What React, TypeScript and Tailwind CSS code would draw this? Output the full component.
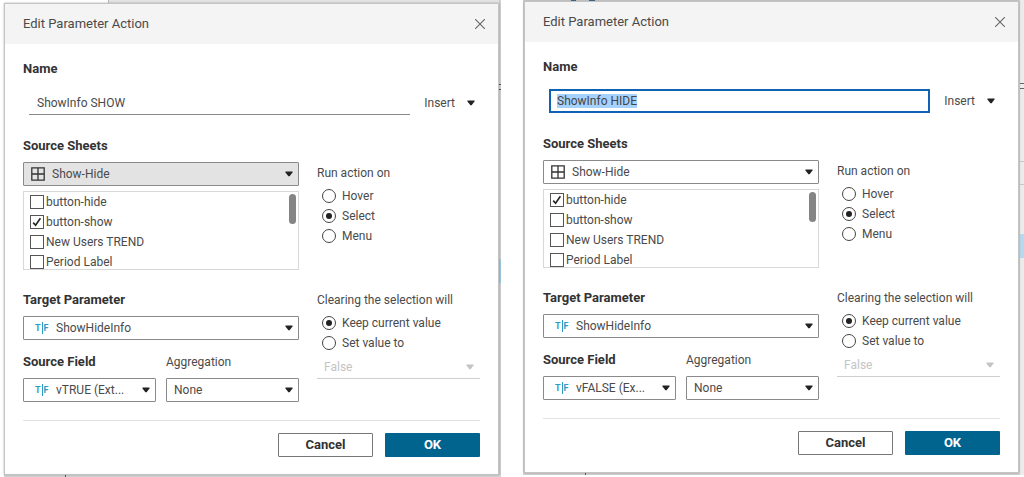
import { useEffect, useId, useRef, useState } from "react";
import type { ReactNode } from "react";

interface ActionConfig {
	name: string;
	nameSelected: boolean;
	sheetMenuActive: boolean;
	checkedSheet: string;
	sourceField: string;
}

const SHEETS = ["button-hide", "button-show", "New Users TREND", "Period Label"];

const ACTIONS: ActionConfig[] = [
	{
		name: "ShowInfo SHOW",
		nameSelected: false,
		sheetMenuActive: true,
		checkedSheet: "button-show",
		sourceField: "vTRUE (Ext...",
	},
	{
		name: "ShowInfo HIDE",
		nameSelected: true,
		sheetMenuActive: false,
		checkedSheet: "button-hide",
		sourceField: "vFALSE (Ex...",
	},
];

function Caret({ className = "" }: { className?: string }) {
	return (
		<svg viewBox="0 0 8 6" className={`h-[6px] w-2 fill-current ${className}`} aria-hidden="true">
			<path d="M0.5 0.5h7v1L4.6 5.3H3.4L0.5 1.5z" />
		</svg>
	);
}

function GridIcon() {
	return (
		<svg viewBox="0 0 14 14" className="h-3.5 w-3.5" fill="none" stroke="#333" strokeWidth="1.3" aria-hidden="true">
			<path d="M0.8 0.8h12.4v12.4H0.8zM7 0.8v12.4M0.8 7h12.4" />
		</svg>
	);
}

function BooleanIcon() {
	return (
		<span className="ml-1 flex items-center gap-px text-[9px] leading-3 font-bold text-[#2e9bc6]" aria-hidden="true">
			T<span className="h-3 w-px bg-[#2e9bc6]" />F
		</span>
	);
}

interface DropdownProps {
	id: string;
	value: string;
	icon?: ReactNode;
	active?: boolean;
	inset?: string;
}

function Dropdown({ id, value, icon, active, inset = "pl-[7px]" }: DropdownProps) {
	return (
		<div className="relative">
			<select
				id={id}
				className={`block h-6 w-full appearance-none rounded-[1px] border border-[#8a8a8a] pr-5 outline-none ${inset} ${
					active ? "bg-[#e3e3e3]" : "bg-white"
				}`}
			>
				<option>{value}</option>
			</select>
			{icon && (
				<span className="pointer-events-none absolute inset-y-0 left-2 flex items-center">
					{icon}
				</span>
			)}
			<Caret className="pointer-events-none absolute top-[9px] right-[6px] text-[#222]" />
		</div>
	);
}

function CheckItem({ label, defaultChecked }: { label: string; defaultChecked: boolean }) {
	return (
		<label className="flex h-5 items-center gap-0.5">
			<span className="grid h-3.5 w-3.5">
				<input
					type="checkbox"
					defaultChecked={defaultChecked}
					className="peer col-start-1 row-start-1 h-3.5 w-3.5 appearance-none border border-[#555] bg-white"
				/>
				<svg
					viewBox="0 0 14 14"
					className="pointer-events-none invisible col-start-1 row-start-1 h-3.5 w-3.5 peer-checked:visible"
					fill="none"
					stroke="#222"
					strokeWidth="1.6"
					aria-hidden="true"
				>
					<path d="M3.2 7.6l2.4 2.7 4.8-7" />
				</svg>
			</span>
			{label}
		</label>
	);
}

interface RadioListProps {
	legend: string;
	options: string[];
	selected: string;
}

function RadioList({ legend, options, selected }: RadioListProps) {
	const name = useId();
	return (
		<fieldset>
			<legend className="leading-5">{legend}</legend>
			<div className="mt-[3px] pl-[5px]">
				{options.map((option) => (
					<label key={option} className="flex h-5 items-center gap-1.5">
						<span className="grid h-3.5 w-3.5 place-items-center">
							<input
								type="radio"
								name={name}
								defaultChecked={option === selected}
								className="peer col-start-1 row-start-1 h-3.5 w-3.5 appearance-none rounded-full border border-[#444] bg-white"
							/>
							<span className="pointer-events-none invisible col-start-1 row-start-1 h-1.5 w-1.5 rounded-full bg-[#222] peer-checked:visible" />
						</span>
						{option}
					</label>
				))}
			</div>
		</fieldset>
	);
}

function ParameterActionDialog({ action }: { action: ActionConfig }) {
	const id = useId();
	const nameRef = useRef<HTMLInputElement>(null);
	const [name, setName] = useState(action.name);

	useEffect(() => {
		if (action.nameSelected) {
			nameRef.current?.focus();
			nameRef.current?.select();
		}
	}, [action.nameSelected]);

	return (
		<section
			aria-labelledby={`${id}-title`}
			className="relative border border-[#c4c4c4] bg-white shadow-[0_0_2px_rgba(0,0,0,0.3)]"
		>
			<header className="flex h-10 items-center justify-between bg-[#f4f4f4] pr-[13px] pl-[18px]">
				<h2 id={`${id}-title`} className="text-[13px]">
					Edit Parameter Action
				</h2>
				<button type="button" aria-label="Close">
					<svg viewBox="0 0 10 10" className="h-2.5 w-2.5" stroke="#666" strokeWidth="1.1" aria-hidden="true">
						<path d="M0 0l10 10M10 0L0 10" />
					</svg>
				</button>
			</header>

			<form className="px-[18px] pt-[15px] pb-[17px]" onSubmit={(e) => e.preventDefault()}>
				<label htmlFor={`${id}-name`} className="block text-[13px] leading-5 font-bold text-[#333]">
					Name
				</label>
				<div className="mt-3 flex items-center gap-3.5 pl-1.5">
					<input
						ref={nameRef}
						id={`${id}-name`}
						type="text"
						value={name}
						onChange={(e) => setName(e.target.value)}
						className={`h-6 min-w-0 flex-1 outline-none selection:bg-[#a6d2ff] selection:text-[#444] ${
							action.nameSelected
								? "border-2 border-[#0f62b4] px-1.5"
								: "border-b border-[#888] px-2"
						}`}
					/>
					<button type="button" className="flex items-center gap-3 pr-[5px]">
						Insert
						<Caret className="text-[#222]" />
					</button>
				</div>

				<div className="mt-[21px] grid grid-cols-[1fr_163px] gap-x-[18px] gap-y-5">
					<div>
						<label htmlFor={`${id}-sheets`} className="block text-[13px] leading-5 font-bold text-[#333]">
							Source Sheets
						</label>
						<div className="mt-1.5">
							<Dropdown
								id={`${id}-sheets`}
								value="Show-Hide"
								active={action.sheetMenuActive}
								icon={<GridIcon />}
								inset="pl-7"
							/>
						</div>
						<div className="mt-[5px] flex h-[79px] justify-between overflow-hidden border border-[#d8d8d8] pr-0.5 pl-1.5">
							<div>
								{SHEETS.map((sheet) => (
									<CheckItem
										key={sheet}
										label={sheet}
										defaultChecked={sheet === action.checkedSheet}
									/>
								))}
							</div>
							<div className="mt-0.5 h-[30px] w-[7px] rounded-full bg-[#858585]" />
						</div>
					</div>

					<div className="pt-[27px]">
						<RadioList
							legend="Run action on"
							options={["Hover", "Select", "Menu"]}
							selected="Select"
						/>
					</div>

					<div>
						<label htmlFor={`${id}-target`} className="block text-[13px] leading-5 font-bold text-[#333]">
							Target Parameter
						</label>
						<div className="mt-1.5">
							<Dropdown
								id={`${id}-target`}
								value="ShowHideInfo"
								icon={<BooleanIcon />}
								inset="pl-8"
							/>
						</div>
						<div className="mt-3 grid grid-cols-2 gap-2.5">
							<div>
								<label
									htmlFor={`${id}-field`}
									className="mb-1.5 block text-[13px] leading-5 font-bold text-[#333]"
								>
									Source Field
								</label>
								<Dropdown
									id={`${id}-field`}
									value={action.sourceField}
									icon={<BooleanIcon />}
									inset="pl-8"
								/>
							</div>
							<div>
								<label htmlFor={`${id}-aggregation`} className="mb-1.5 block leading-5">
									Aggregation
								</label>
								<Dropdown id={`${id}-aggregation`} value="None" />
							</div>
						</div>
					</div>

					<div>
						<RadioList
							legend="Clearing the selection will"
							options={["Keep current value", "Set value to"]}
							selected="Keep current value"
						/>
						<div className="relative mt-0.5">
							<select
								disabled
								aria-label="Value when cleared"
								className="block h-6 w-full appearance-none border-b border-[#cfcfcf] bg-white pl-[7px] text-[#c4c4c4] opacity-100"
							>
								<option>False</option>
							</select>
							<Caret className="pointer-events-none absolute top-[9px] right-[6px] text-[#c4c4c4]" />
						</div>
					</div>
				</div>

				<footer className="mt-[18px] flex justify-end gap-3 border-t border-[#e2e2e2] pt-3 text-[13px] font-bold">
					<button
						type="button"
						className="h-6 w-[95px] rounded-[1px] border border-[#777] bg-white text-[#333]"
					>
						Cancel
					</button>
					<button type="submit" className="h-6 w-[95px] rounded-[1px] bg-[#00648f] text-white">
						OK
					</button>
				</footer>
			</form>
		</section>
	);
}

// Slivers of the worksheet that show around the edges of each dialog.
function LeftBackdrop() {
	return (
		<div aria-hidden="true">
			<div className="absolute top-0 right-0 left-[108px] h-1 border-l border-[#bbb] bg-[#e4e4e4]" />
			<div className="absolute inset-y-0 right-0 w-0.5 bg-[#cfcfcf]" />
			<div className="absolute right-0 bottom-0 left-1 h-0.5 bg-[#d6d6d6]" />
			<div className="absolute bottom-0 left-[65px] h-0.5 w-px bg-[#555]" />
			<div className="absolute top-[84px] right-0 h-1.5 w-0.5 border-y border-[#555]" />
			<div className="absolute top-[259px] right-0 h-6 w-0.5 bg-[#9cc8df]" />
		</div>
	);
}

function RightBackdrop() {
	return (
		<div aria-hidden="true">
			<div className="absolute inset-0 bg-[#d2d2d2]" />
			<div className="absolute top-0 left-12 h-px w-[5px] bg-[#3f6f96]" />
			<div className="absolute top-0 left-[66px] h-px w-1.5 bg-[#3f6f96]" />
			<div className="absolute inset-y-0 right-0 w-1 bg-[#ebebeb]" />
			<div className="absolute top-[83px] right-0 h-1.5 w-1 border-y border-[#666]" />
			<div className="absolute top-[161px] right-0 h-6 w-1 border-y border-[#c8c8c8]" />
			<div className="absolute top-[234px] right-0 h-6 w-1 bg-[#b5d9ee]" />
			<div className="absolute bottom-0 left-[62px] h-0.5 w-px bg-[#555]" />
		</div>
	);
}

export default function App() {
	return (
		<main className="flex items-start gap-[22px] bg-white font-[Roboto,sans-serif] text-[12px] text-[#4a4a4a]">
			<div className="relative min-w-0 flex-1 pt-[3px] pr-0.5 pb-0.5 pl-1">
				<LeftBackdrop />
				<ParameterActionDialog action={ACTIONS[0]} />
			</div>
			<div className="relative min-w-0 flex-1 pt-px pr-[5px] pb-0.5 pl-px">
				<RightBackdrop />
				<ParameterActionDialog action={ACTIONS[1]} />
			</div>
		</main>
	);
}
